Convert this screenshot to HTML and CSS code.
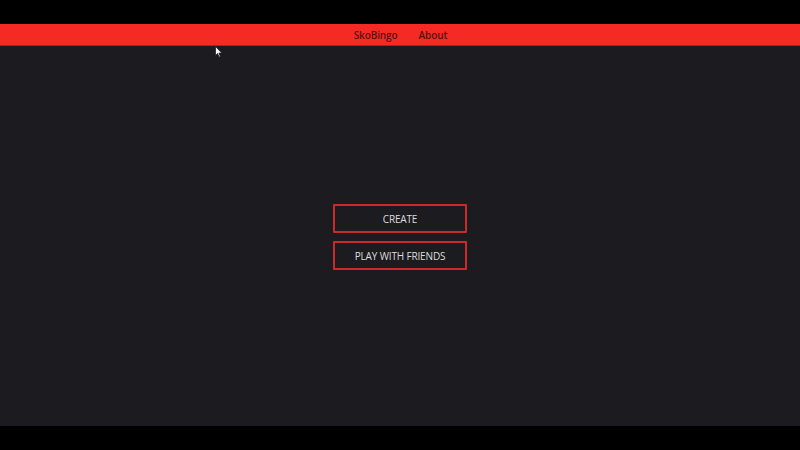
FILE: index.html
```html
<!DOCTYPE html>
<html>
<head>
<meta charset="utf-8">
<link rel="stylesheet" href="styles.css">
</head>
<body>
<div class="frame">
  <div class="letterbox"></div>
  <nav class="topbar">
    <a class="nav-link">SkoBingo</a>
    <a class="nav-link">About</a>
  </nav>
  <main class="stage">
    <div class="actions">
      <button class="btn">CREATE</button>
      <button class="btn">PLAY WITH FRIENDS</button>
    </div>
    <svg class="cursor" width="8" height="12" viewBox="0 0 8 12"><path d="M0.5 0.5 L0.5 9.5 L2.6 7.6 L4.1 11 L5.4 10.4 L3.9 7.1 L6.8 7.1 Z" fill="#fff" stroke="#222" stroke-width="0.8"/></svg>
  </main>
  <div class="letterbox"></div>
</div>
</body>
</html>
```
FILE: styles.css
```css
html, body {
  margin: 0;
  padding: 0;
  background: #000;
}
.frame {
  width: 800px;
  height: 450px;
  display: flex;
  flex-direction: column;
  font-family: "Open Sans", "Noto Sans", sans-serif;
}
.letterbox {
  height: 24px;
  background: #000;
  flex: none;
}
.topbar {
  height: 22px;
  flex: none;
  background: #f52a24;
  border-bottom: 1px solid #b51d1a;
  box-sizing: border-box;
  display: flex;
  justify-content: center;
  align-items: center;
  gap: 21px;
  padding-top: 1px;
  padding-left: 1px;
}
.nav-link {
  color: #5a1212;
  font-size: 10px;
  font-weight: 600;
  letter-spacing: -0.1px;
}
.stage {
  flex: 1;
  background: #1c1b1f;
  display: flex;
  align-items: center;
  justify-content: center;
  position: relative;
}
.actions {
  display: flex;
  flex-direction: column;
  gap: 8px;
  margin-top: 1px;
}
.btn {
  width: 134px;
  height: 29px;
  background: transparent;
  border: 2px solid #cc2a2a;
  border-radius: 1px;
  color: #dcdcdc;
  font-family: "Open Sans", "Noto Sans", sans-serif;
  font-size: 10px;
  letter-spacing: -0.15px;
  padding: 1px 0 0;
}
.cursor {
  position: absolute;
  left: 215px;
  top: 0px;
}
```
